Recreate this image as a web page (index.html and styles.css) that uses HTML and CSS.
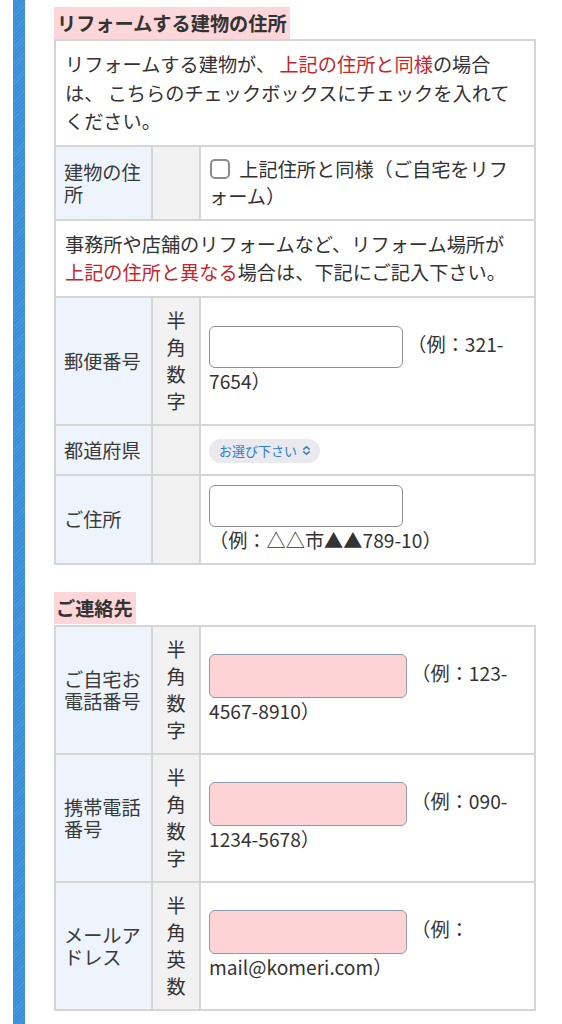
FILE: index.html
```html
<!DOCTYPE html>
<html lang="ja">
<head>
<meta charset="utf-8">
<link rel="stylesheet" href="styles.css">
</head>
<body>
<div class="page">
  <div class="stripe"></div>
  <main class="content">
    <h2 class="heading">リフォームする建物の住所</h2>
    <table class="form">
      <colgroup><col class="c-label"><col class="c-half"><col class="c-field"></colgroup>
      <tr>
        <td class="note" colspan="3">リフォームする建物が、 <span class="red">上記の住所と同様</span>の場合は、 こちらのチェックボックスにチェックを入れてください。</td>
      </tr>
      <tr>
        <th class="label">建物の住所</th>
        <td class="half"></td>
        <td class="field"><span class="check"></span> 上記住所と同様（ご自宅をリフォーム）</td>
      </tr>
      <tr>
        <td class="note" colspan="3">事務所や店舗のリフォームなど、リフォーム場所が<span class="red">上記の住所と異なる</span>場合は、下記にご記入下さい。</td>
      </tr>
      <tr>
        <th class="label">郵便番号</th>
        <td class="half">半角数字</td>
        <td class="field"><span class="input"></span> （例：321-7654）</td>
      </tr>
      <tr>
        <th class="label">都道府県</th>
        <td class="half"></td>
        <td class="field"><span class="select">お選び下さい<svg class="chev" viewBox="0 0 10 12" width="9" height="11"><path d="M2 4.5 L5 1.8 L8 4.5 M2 7.5 L5 10.2 L8 7.5" fill="none" stroke="currentColor" stroke-width="1.7" stroke-linecap="round" stroke-linejoin="round"/></svg></span></td>
      </tr>
      <tr>
        <th class="label">ご住所</th>
        <td class="half"></td>
        <td class="field"><span class="input"></span><br>（例：△△市▲▲789-10）</td>
      </tr>
    </table>

    <h2 class="heading heading-2">ご連絡先</h2>
    <table class="form">
      <colgroup><col class="c-label"><col class="c-half"><col class="c-field"></colgroup>
      <tr>
        <th class="label">ご自宅お電話番号</th>
        <td class="half">半角数字</td>
        <td class="field"><span class="input pink"></span> （例：123-4567-8910）</td>
      </tr>
      <tr>
        <th class="label">携帯電話番号</th>
        <td class="half">半角数字</td>
        <td class="field"><span class="input pink"></span> （例：090-1234-5678）</td>
      </tr>
      <tr>
        <th class="label">メールアドレス</th>
        <td class="half">半角英数</td>
        <td class="field"><span class="input pink"></span> （例：mail@komeri.com）</td>
      </tr>
    </table>
  </main>
</div>
</body>
</html>
```
FILE: styles.css
```css
html, body {
  margin: 0;
  padding: 0;
  background: #ffffff;
}
body {
  font-family: "Noto Sans CJK JP", "Noto Sans", sans-serif;
  font-size: 19.2px;
  color: #333333;
}
.page {
  display: flex;
  padding-left: 13px;
  min-height: 1024px;
}
.stripe {
  width: 12px;
  flex: none;
  background-color: #3a8fd8;
  background-image: repeating-linear-gradient(135deg, rgba(255,255,255,0.08) 0 1px, transparent 1px 3px);
}
.content {
  padding-left: 29px;
  width: 481px;
  padding-top: 7px;
}
.heading {
  display: inline-block;
  margin: 0;
  padding: 0 3px;
  background: #fdd6d9;
  font-size: 19.2px;
  font-weight: 700;
  line-height: 32px;
  color: #333333;
}
.heading-2 {
  margin-top: 27px;
  margin-bottom: 1px;
  padding-left: 2px;
}
.form {
  width: 482px;
  border-collapse: collapse;
  table-layout: fixed;
  margin-top: 0;
}
.c-label { width: 97px; }
.c-half { width: 48px; }
.form th, .form td {
  border: 2px solid #d6d6d6;
  padding: 9px 8px;
  vertical-align: middle;
  text-align: left;
  font-weight: 400;
}
.form td.note {
  line-height: 28.6px;
  padding: 9px 14px 9px 9px;
}
.red {
  color: #c3272e;
}
.label {
  background: #edf4fb;
  line-height: 1.15;
  color: #3a3a3a;
}
.form td.half {
  background: #f2f2f2;
  text-align: center;
  padding: 9px 10px;
  line-height: 27px;
}
.form td.field {
  line-height: 27px;
  padding: 9px 12px 9px 8px;
}
.check {
  display: inline-block;
  width: 16px;
  height: 16px;
  border: 2px solid #8c8c8c;
  border-radius: 5px;
  vertical-align: -2px;
  margin-left: 1px;
  margin-right: 5px;
}
.input {
  display: inline-block;
  width: 192px;
  height: 40px;
  border: 1.5px solid #8f8f8f;
  border-radius: 6px;
  vertical-align: middle;
  background: #ffffff;
}
.input.pink {
  width: 196px;
  height: 42px;
  background: #fdd3d6;
  border-color: #8d9bb2;
}
.select {
  display: inline-flex;
  align-items: center;
  gap: 5px;
  font-size: 13px;
  line-height: 24px;
  height: 24px;
  padding: 0 9px 0 10px;
  margin: 2px 0;
  border-radius: 12px;
  background: #e9e9ee;
  color: #2e7cd2;
  vertical-align: middle;
}
.chev {
  display: block;
}
```
